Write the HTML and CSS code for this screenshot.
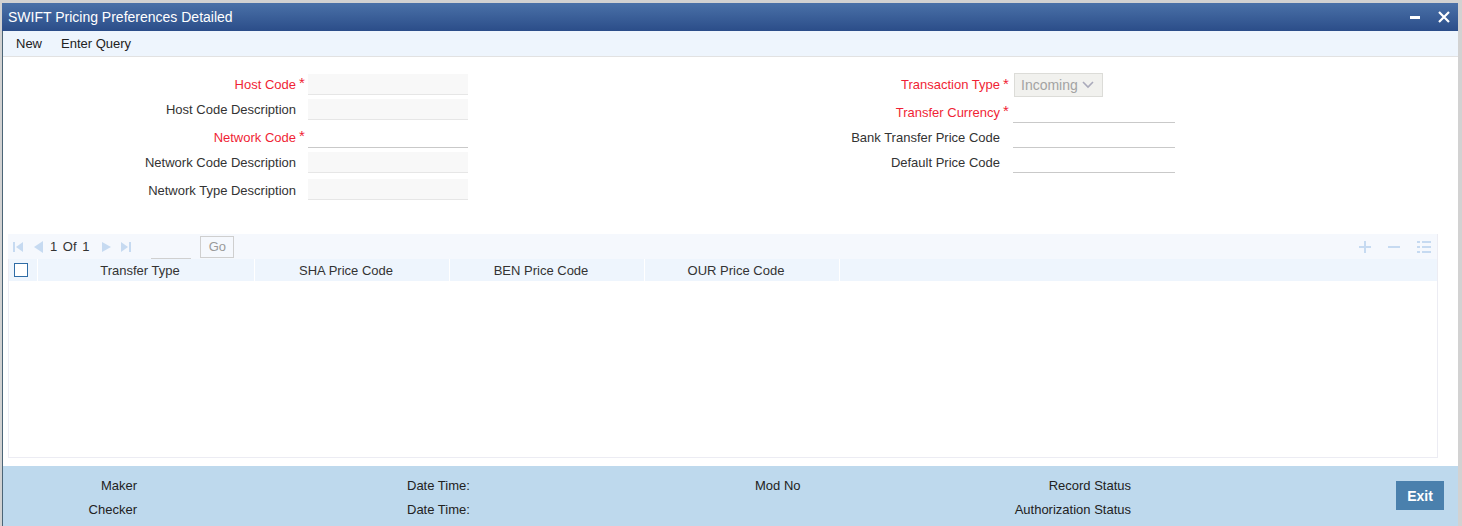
FILE: index.html
```html
<!DOCTYPE html>
<html>
<head>
<meta charset="utf-8">
<link rel="stylesheet" href="styles.css">
</head>
<body>
<div class="window">
  <div class="titlebar">
    <span class="title">SWIFT Pricing Preferences Detailed</span>
    <span class="win-btns">
      <svg class="wb" width="12" height="12" viewBox="0 0 12 12"><rect x="1" y="5" width="10" height="3" fill="#fff"/></svg>
      <svg class="wb close" width="14" height="14" viewBox="0 0 14 14"><path d="M2 2 L12 12 M12 2 L2 12" stroke="#fff" stroke-width="2.2"/></svg>
    </span>
  </div>
  <div class="toolbar">
    <span class="tb-item">New</span>
    <span class="tb-item">Enter Query</span>
  </div>
  <div class="form">
    <div class="col left">
      <div class="row"><label class="lbl req">Host Code</label><span class="ast">*</span><span class="inp ro"></span></div>
      <div class="row"><label class="lbl">Host Code Description</label><span class="ast"></span><span class="inp ro"></span></div>
      <div class="row"><label class="lbl req">Network Code</label><span class="ast">*</span><span class="inp"></span></div>
      <div class="row"><label class="lbl">Network Code Description</label><span class="ast"></span><span class="inp ro"></span></div>
      <div class="row last"><label class="lbl">Network Type Description</label><span class="ast"></span><span class="inp ro"></span></div>
    </div>
    <div class="col right">
      <div class="row first"><label class="lbl req">Transaction Type</label><span class="ast">*</span>
        <span class="select">Incoming<svg width="14" height="10" viewBox="0 0 14 10"><path d="M2 2 L7 7 L12 2" fill="none" stroke="#aab" stroke-width="1.6"/></svg></span></div>
      <div class="row"><label class="lbl req">Transfer Currency</label><span class="ast">*</span><span class="inp w"></span></div>
      <div class="row"><label class="lbl">Bank Transfer Price Code</label><span class="ast"></span><span class="inp w"></span></div>
      <div class="row"><label class="lbl">Default Price Code</label><span class="ast"></span><span class="inp w"></span></div>
    </div>
  </div>
  <div class="grid">
    <div class="gtool">
      <div class="pager">
        <svg class="pi first" width="12" height="12" viewBox="0 0 12 12"><rect x="1" y="1" width="2" height="10" fill="#c6daf1"/><path d="M11 1 L4 6 L11 11 Z" fill="#c6daf1"/></svg>
        <svg class="pi prev" width="12" height="12" viewBox="0 0 12 12"><path d="M11 0 L2 6 L11 12 Z" fill="#c6daf1"/></svg>
        <span class="pg">1 Of 1</span>
        <svg class="pi next" width="12" height="12" viewBox="0 0 12 12"><path d="M1 1 L10 6 L1 11 Z" fill="#c6daf1"/></svg>
        <svg class="pi last" width="12" height="12" viewBox="0 0 12 12"><path d="M1 1 L8 6 L1 11 Z" fill="#c6daf1"/><rect x="9" y="1" width="2" height="10" fill="#c6daf1"/></svg>
        <span class="pginp"></span>
        <span class="go">Go</span>
      </div>
      <div class="gicons">
        <svg width="12" height="12" viewBox="0 0 12 12"><path d="M6 0 V12 M0 6 H12" stroke="#c6daf1" stroke-width="2"/></svg>
        <svg width="12" height="12" viewBox="0 0 12 12"><path d="M0 6 H12" stroke="#c6daf1" stroke-width="2"/></svg>
        <svg width="14" height="12" viewBox="0 0 14 12"><g fill="#c6daf1"><rect x="0" y="0" width="3" height="2"/><rect x="5" y="0" width="9" height="2"/><rect x="0" y="5" width="3" height="2"/><rect x="5" y="5" width="9" height="2"/><rect x="0" y="10" width="3" height="2"/><rect x="5" y="10" width="9" height="2"/></g></svg>
      </div>
    </div>
    <div class="ghead">
      <div class="hc chk"><span class="cb"></span></div>
      <div class="hc c1">Transfer Type</div>
      <div class="hc c2">SHA Price Code</div>
      <div class="hc c2">BEN Price Code</div>
      <div class="hc c2">OUR Price Code</div>
      <div class="hc rest"></div>
    </div>
    <div class="gbody"></div>
  </div>
  <div class="footer">
    <div class="fcol f1"><span>Maker</span><span>Checker</span></div>
    <div class="fcol f2"><span>Date Time:</span><span>Date Time:</span></div>
    <div class="fcol f3"><span>Mod No</span><span></span></div>
    <div class="fcol f4"><span>Record Status</span><span>Authorization Status</span></div>
    <div class="exit">Exit</div>
  </div>
</div>
</body>
</html>
```
FILE: styles.css
```css
html, body {
  margin: 0;
  padding: 0;
}
body {
  background: #d2d2d2;
  font-family: "Liberation Sans", Arial, sans-serif;
  font-size: 13px;
  color: #333;
  width: 1462px;
  height: 526px;
  overflow: hidden;
}
.window {
  margin: 3px 0 0 2px;
  width: 1456px;
  height: 523px;
  background: #fff;
  display: flex;
  flex-direction: column;
  border-left: 1px solid #4b6577;
  box-sizing: border-box;
}
.titlebar {
  height: 28px;
  background: linear-gradient(#4a71a8, #2b4d89);
  display: flex;
  align-items: center;
  justify-content: space-between;
  padding-left: 6px;
  margin-left: -1px;
  flex-shrink: 0;
}
.title {
  color: #fff;
  font-size: 14px;
}
.win-btns {
  display: flex;
  align-items: center;
  gap: 16px;
  padding-right: 7px;
}
.wb { display: block; }
.toolbar {
  height: 25px;
  background: #eef5fd;
  border-bottom: 1px solid #e2e2e2;
  display: flex;
  align-items: center;
  padding-left: 13px;
  gap: 19px;
  flex-shrink: 0;
  color: #222;
}
.form {
  display: flex;
  height: 176px;
  flex-shrink: 0;
}
.col {
  display: grid;
  align-content: start;
}
.left {
  padding-top: 17px;
  grid-template-rows: 25px 28px 25px 27px 21px;
}
.right {
  margin-left: 239px;
  padding-top: 16px;
  grid-template-rows: 29px 25px 25px 25px;
}
.row {
  display: flex;
  align-items: flex-start;
}
.lbl {
  width: 293px;
  text-align: right;
  line-height: 20px;
  padding-top: 1px;
  white-space: nowrap;
}
.left .row.last .lbl { padding-top: 2px; }
.req { color: #f01f35; }
.ast {
  width: 7px;
  color: #f01f35;
  line-height: 18px;
  padding-left: 3px;
  font-size: 15px;
}
.left .ast { margin-right: 2px; }
.right .ast { margin-right: 3px; }
.inp {
  width: 160px;
  height: 20px;
  border-bottom: 1px solid #c9c9c9;
}
.inp.ro {
  background: #f8f8f8;
  border-bottom-color: #e6e6e6;
}
.right .row.first .lbl { line-height: 24px; padding-top: 0; }
.right .row.first .ast { line-height: 22px; }
.right .row.first .ast { margin-right: 0; }
.right .row:not(.first) .lbl { padding-top: 1px; }
.inp.w { width: 162px; }
.select {
  width: 89px;
  height: 24px;
  box-sizing: border-box;
  border: 1px solid #dcdcd8;
  background: #f1f1ee;
  color: #a3a3a3;
  display: flex;
  align-items: center;
  justify-content: space-between;
  padding: 0 7px 0 6px;
  font-size: 14px;
  margin-left: 4px;
}
.select svg { display: block; }
.grid {
  margin: 1px 0 0 5px;
  width: 1430px;
  height: 224px;
  box-sizing: border-box;
  border: 1px solid #ececf3;
  border-top: none;
  display: flex;
  flex-direction: column;
  flex-shrink: 0;
}
.gtool {
  height: 25px;
  background: #f5f8fd;
  display: flex;
  align-items: center;
  justify-content: space-between;
  margin-left: -1px;
}
.pager {
  display: flex;
  align-items: center;
  padding-left: 4px;
}
.pi { display: block; }
.pi.first { margin-right: 8px; }
.pi.prev { margin-right: 6px; }
.pg {
  color: #333;
  word-spacing: 2px;
  margin-right: 12px;
}
.pi.next { margin-right: 7px; }
.pginp {
  width: 40px;
  height: 22px;
  border-bottom: 1px solid #d0d0d0;
  margin-left: 19px;
  margin-top: 2px;
  box-sizing: border-box;
}
.go {
  margin-left: 9px;
  width: 34px;
  height: 22px;
  box-sizing: border-box;
  border: 1px solid #cfcfcf;
  color: #9a9a9a;
  display: flex;
  align-items: center;
  justify-content: center;
  font-size: 13px;
}
.gicons {
  display: flex;
  align-items: center;
  gap: 17px;
  padding-right: 6px;
}
.gicons svg { display: block; }
.ghead {
  height: 22px;
  display: flex;
  background: #eef5fd;
}
.hc {
  border-right: 1px solid #fff;
  display: flex;
  align-items: center;
  justify-content: center;
  color: #333;
  font-size: 13px;
  padding-right: 12px;
  box-sizing: border-box;
}
.chk { width: 29px; justify-content: flex-start; padding-left: 5px; padding-right: 0; }
.cb {
  width: 14px;
  height: 14px;
  border: 1px solid #2e6ca6;
  background: #fff;
  box-sizing: border-box;
  display: block;
}
.c1 { width: 217px; }
.c2 { width: 195px; }
.rest { flex: 1; border-right: none; }
.gbody { flex: 1; }
.footer {
  margin-top: 8px;
  flex: 1;
  background: #bed9ed;
  position: relative;
  display: flex;
  color: #222;
}
.fcol {
  display: flex;
  flex-direction: column;
  padding-top: 12px;
  gap: 8px;
  line-height: 16px;
}
.fcol span { min-height: 16px; }
.f1 { width: 134px; text-align: right; }
.f2 { margin-left: 270px; width: 200px; }
.f3 { margin-left: 148px; width: 200px; }
.f4 { margin-left: 0; width: 176px; text-align: right; }
.exit {
  position: absolute;
  left: 1393px;
  top: 15px;
  width: 48px;
  height: 29px;
  background: #4a80ad;
  color: #fff;
  font-weight: bold;
  font-size: 14px;
  display: flex;
  align-items: center;
  justify-content: center;
}
```
